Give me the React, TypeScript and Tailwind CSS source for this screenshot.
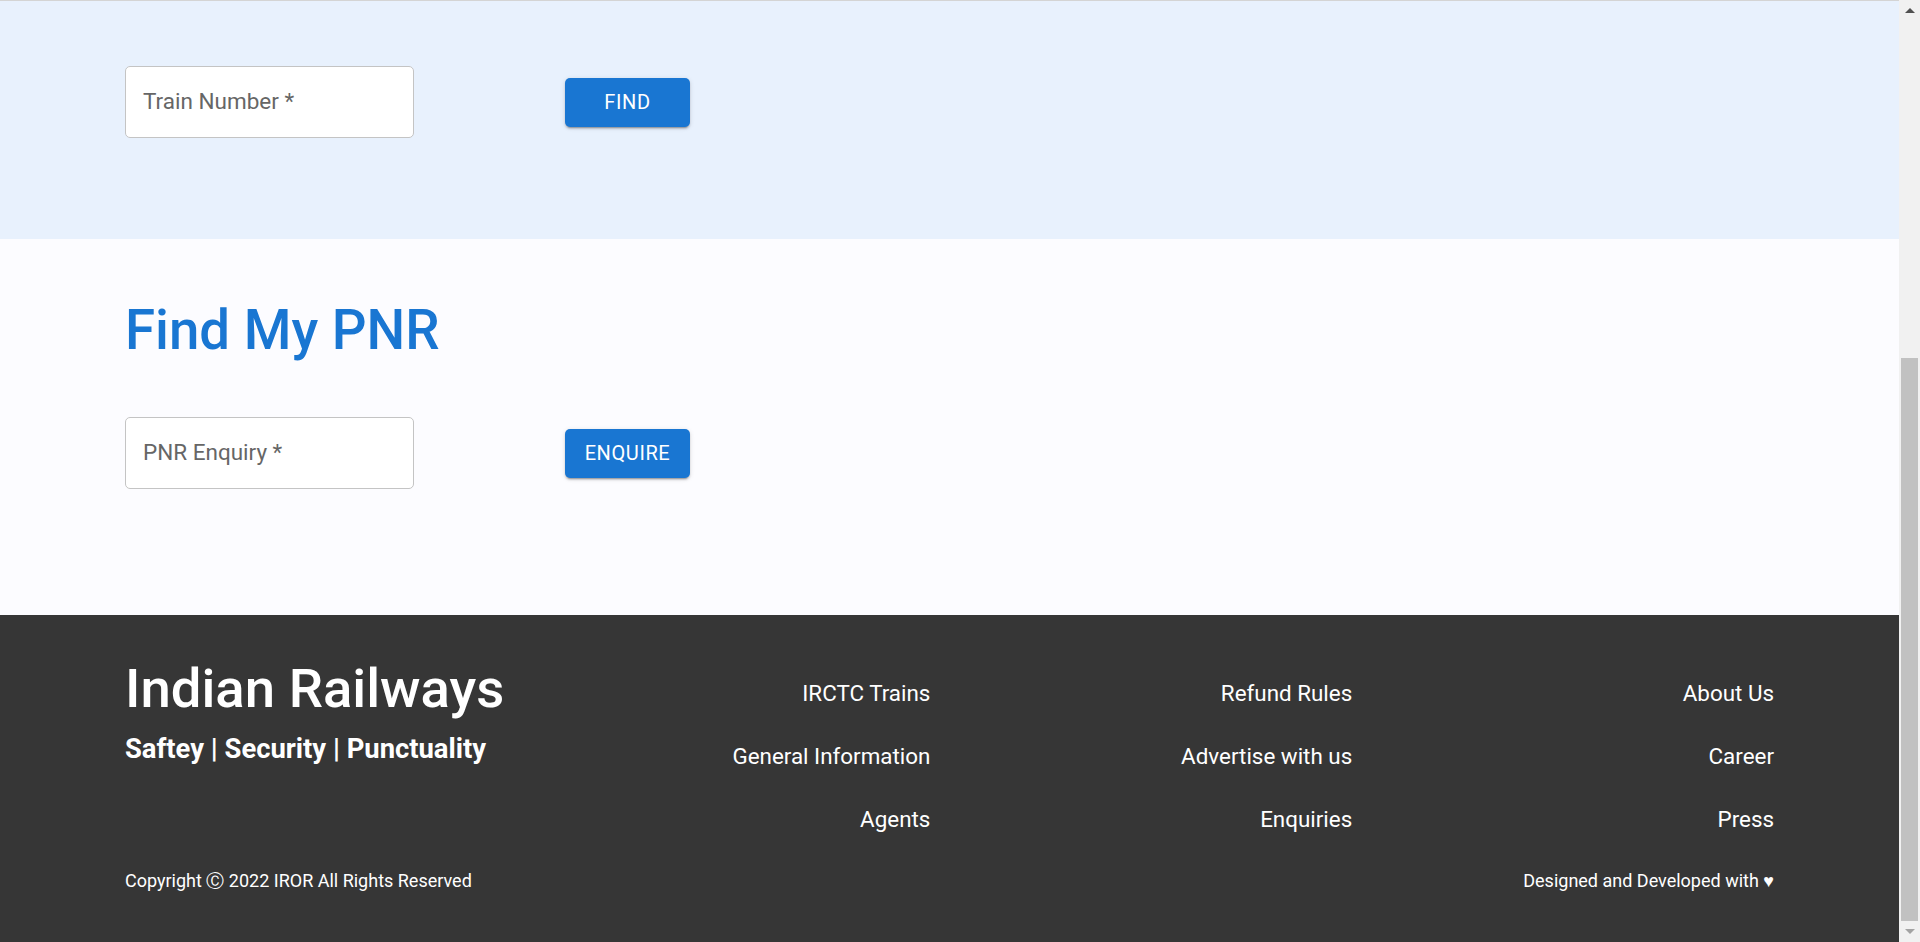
const linkCols = [
  ["IRCTC Trains", "General Information", "Agents"],
  ["Refund Rules", "Advertise with us", "Enquiries"],
  ["About Us", "Career", "Press"],
];

function Field({ label }: { label: string }) {
  return (
    <div className="w-[289px] h-[72px] bg-white border border-[#c4c4c4] rounded-[5px] flex items-center pl-[17px]">
      <span className="text-[22.5px] text-[#666666]">{label}</span>
    </div>
  );
}

function Btn({ text }: { text: string }) {
  return (
    <button className="w-[125px] h-[49px] bg-[#1976d2] text-white rounded-[5px] text-[20px] font-normal tracking-[0.03em] uppercase shadow-[0_3px_1px_-2px_rgba(0,0,0,0.2),0_2px_2px_0_rgba(0,0,0,0.14),0_1px_5px_0_rgba(0,0,0,0.12)]">
      {text}
    </button>
  );
}

export default function App() {
  return (
    <div className="h-screen flex overflow-hidden font-['Roboto',sans-serif]">
      <main className="flex-1 flex flex-col bg-[#fcfcff]">
        <section className="h-[239px] bg-[#e8f1fd] border-t border-[#d4d4d4] px-[125px] pt-[65px]">
          <div className="flex items-center gap-[151px]">
            <Field label="Train Number *" />
            <Btn text="Find" />
          </div>
        </section>

        <section className="h-[376px] px-[125px] pt-[57px]">
          <h2 className="text-[54.6px] leading-[1.25] font-medium text-[#1976d2]">Find My PNR</h2>
          <div className="flex items-center gap-[151px] mt-[53px]">
            <Field label="PNR Enquiry *" />
            <Btn text="Enquire" />
          </div>
        </section>

        <footer className="flex-1 bg-[#363636] text-white px-[125px] pt-[39px]">
          <div className="flex">
            <div className="flex-1">
              <h2 className="text-[54.5px] leading-[1.25] font-medium">Indian Railways</h2>
              <p className="text-[27.4px] leading-[1.2] font-bold mt-[11px]">Saftey | Security | Punctuality</p>
            </div>
            {linkCols.map((col, i) => (
              <div key={i} className="w-[421.8px] flex flex-col items-end gap-[29.5px] mt-[23px]">
                {col.map((l) => (
                  <a key={l} className="text-[22.4px] leading-[1.5]">
                    {l}
                  </a>
                ))}
              </div>
            ))}
          </div>
          <div className="flex justify-between mt-[30px] text-[18px] leading-[1.5]">
            <span>Copyright Ⓒ 2022 IROR All Rights Reserved</span>
            <span>Designed and Developed with ♥</span>
          </div>
        </footer>
      </main>

      {/* browser scrollbar, page scrolled to the bottom */}
      <aside className="w-[21px] bg-[#f1f1f1] flex flex-col">
        <div className="h-[21px] flex items-center justify-center">
          <div className="w-0 h-0 border-x-[5px] border-x-transparent border-b-[5px] border-b-[#505050]" />
        </div>
        <div className="flex-1" />
        <div className="h-[563px] mx-[2px] bg-[#c1c1c1]" />
        <div className="h-[21px] flex items-center justify-center">
          <div className="w-0 h-0 border-x-[5px] border-x-transparent border-t-[5px] border-t-[#a3a3a3]" />
        </div>
      </aside>
    </div>
  );
}
